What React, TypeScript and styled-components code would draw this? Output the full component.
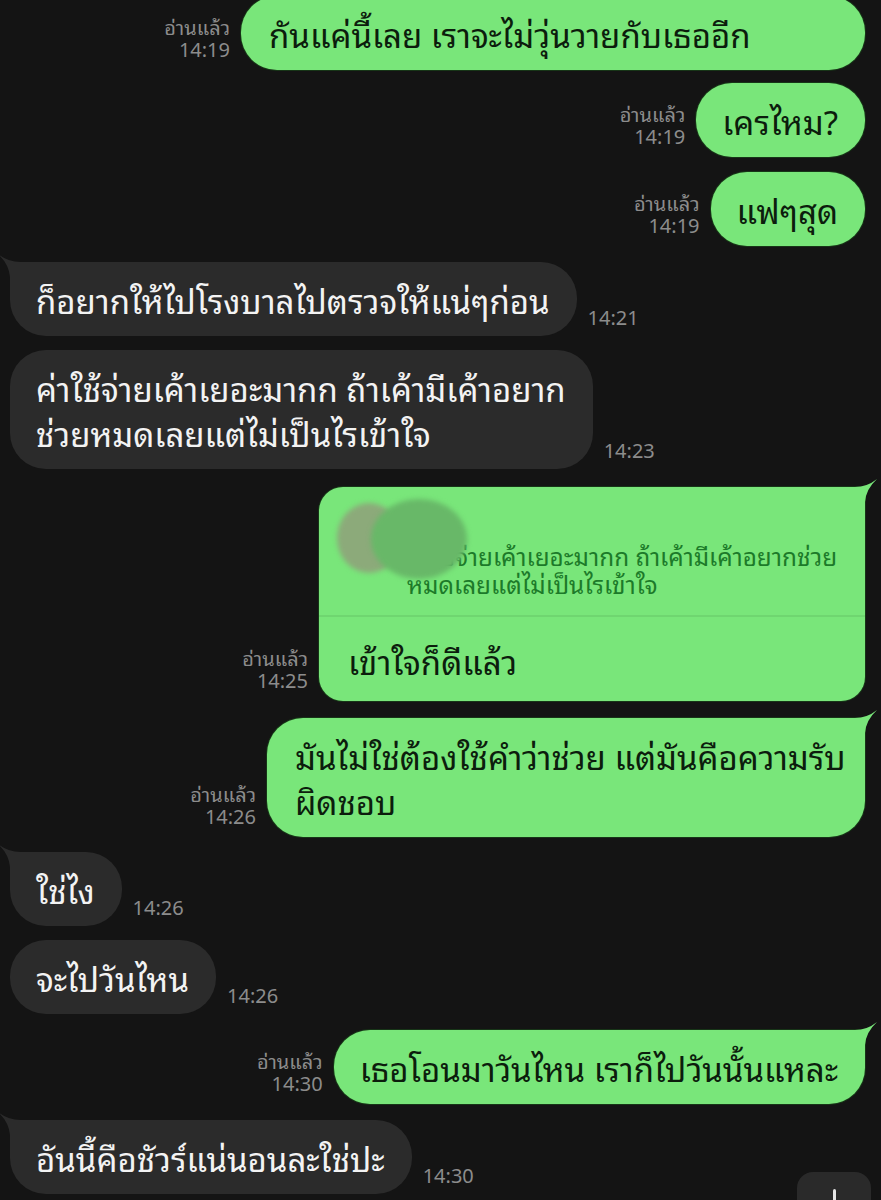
import React from "react";
import styled, { createGlobalStyle } from "styled-components";

const GlobalStyle = createGlobalStyle`
  html, body { margin: 0; padding: 0; background: #141414; }
  * { box-sizing: border-box; }
`;

const GREEN = "#79e67a";
const GRAY = "#2b2b2b";
const FONT = `"Noto Sans Thai Looped", "Noto Sans Thai", "Noto Sans", "DejaVu Sans", sans-serif`;

const Screen = styled.div`
  position: relative;
  width: 881px;
  height: 1200px;
  overflow: hidden;
  background: #141414;
  font-family: ${FONT};
`;

const Chat = styled.div`
  display: flex;
  flex-direction: column;
  padding: 0 16px 0 10px;
  margin-top: -4px;
`;

const Row = styled.div<{ $out?: boolean; $mt: number }>`
  display: flex;
  justify-content: ${(p) => (p.$out ? "flex-end" : "flex-start")};
  align-items: flex-end;
  gap: 11px;
  margin-top: ${(p) => p.$mt}px;
`;

const Meta = styled.div`
  display: flex;
  flex-direction: column;
  align-items: flex-end;
  color: #8c8c8c;
  font-size: 20px;
  line-height: 22px;
  padding-bottom: 11px;
  white-space: nowrap;
`;

const Time = styled.div`
  color: #8c8c8c;
  font-size: 20px;
  line-height: 22px;
  padding-bottom: 9px;
  white-space: nowrap;
`;

const Bubble = styled.div<{ $out?: boolean; $tail?: boolean; $w?: number }>`
  position: relative;
  background: ${(p) => (p.$out ? GREEN : GRAY)};
  color: ${(p) => (p.$out ? "#0c1d0d" : "#f3f3f3")};
  box-shadow: ${(p) => (p.$out ? "0 0 0 1px rgba(25, 80, 25, 0.55)" : "none")};
  font-size: 33px;
  line-height: 45px;
  padding: 14.5px 27px 14.5px 26px;
  border-radius: 36px;
  white-space: nowrap;
  ${(p) => (p.$w ? `width: ${p.$w}px; padding-left: 28px;` : "")}
  ${(p) =>
    p.$tail
      ? p.$out
        ? "border-top-right-radius: 0;"
        : "border-top-left-radius: 0;"
      : ""}
`;

const Tail = styled.svg<{ $out?: boolean }>`
  position: absolute;
  top: -9px;
  width: 37px;
  height: 40px;
  ${(p) => (p.$out ? "right: -13px;" : "left: -13px; transform: scaleX(-1);")}
`;

const TailShape = ({ out }: { out?: boolean }) => (
  <Tail $out={out} viewBox="0 0 37 40">
    <path
      d="M0 9 L14 9 Q26 9 36 1 Q25 11 24 24 L24 40 L0 40 Z"
      fill={out ? GREEN : GRAY}
    />
  </Tail>
);

const ReplyBubble = styled.div`
  position: relative;
  background: ${GREEN};
  box-shadow: 0 0 0 1px rgba(25, 80, 25, 0.55);
  border-radius: 24px;
  border-top-right-radius: 0;
  width: 546px;
`;

const Quote = styled.div`
  position: relative;
  padding: 55px 16px 17px 88px;
  color: #1c7a29;
  font-size: 24.3px;
  line-height: 28px;
  white-space: nowrap;
  border-bottom: 2px solid #6fd670;
`;

const Blob = styled.div`
  position: absolute;
  left: 0;
  top: 0;
  width: 160px;
  height: 100px;
  pointer-events: none;
`;

const BlobPart = styled.div<{ $l: number; $t: number; $w: number; $h: number; $c: string }>`
  position: absolute;
  left: ${(p) => p.$l}px;
  top: ${(p) => p.$t}px;
  width: ${(p) => p.$w}px;
  height: ${(p) => p.$h}px;
  border-radius: 50%;
  background: ${(p) => p.$c};
  filter: blur(2.5px);
`;

const ReplyText = styled.div`
  padding: 22px 25px 18px 29px;
  color: #0c1d0d;
  font-size: 33px;
  line-height: 44px;
  white-space: nowrap;
`;

const ScrollButton = styled.div`
  position: absolute;
  left: 797px;
  top: 1172px;
  width: 74px;
  height: 60px;
  border-radius: 16px;
  background: #2a2a2a;
  display: flex;
  justify-content: center;
`;

const ArrowStem = styled.div`
  margin-top: 17px;
  width: 3px;
  height: 16px;
  border-radius: 2px;
  background: #e6e6e6;
`;

const ReadMeta = ({ t }: { t: string }) => (
  <Meta>
    <span>อ่านแล้ว</span>
    <span>{t}</span>
  </Meta>
);

export default function App() {
  return (
    <Screen>
      <GlobalStyle />
      <Chat>
        <Row $out $mt={0}>
          <ReadMeta t="14:19" />
          <Bubble $out $w={624}>
            กันแค่นี้เลย เราจะไม่วุ่นวายกับเธออีก
          </Bubble>
        </Row>
        <Row $out $mt={13}>
          <ReadMeta t="14:19" />
          <Bubble $out>เครไหม?</Bubble>
        </Row>
        <Row $out $mt={15}>
          <ReadMeta t="14:19" />
          <Bubble $out>แฟๆสุด</Bubble>
        </Row>
        <Row $mt={16}>
          <Bubble $tail>
            <TailShape />
            ก็อยากให้ไปโรงบาลไปตรวจให้แน่ๆก่อน
          </Bubble>
          <Time>14:21</Time>
        </Row>
        <Row $mt={14}>
          <Bubble>
            ค่าใช้จ่ายเค้าเยอะมากก ถ้าเค้ามีเค้าอยาก
            <br />
            ช่วยหมดเลยแต่ไม่เป็นไรเข้าใจ
          </Bubble>
          <Time>14:23</Time>
        </Row>
        <Row $out $mt={18}>
          <ReadMeta t="14:25" />
          <ReplyBubble>
            <TailShape out />
            <Quote>
              ค่าใช้จ่ายเค้าเยอะมากก ถ้าเค้ามีเค้าอยากช่วย
              <br />
              หมดเลยแต่ไม่เป็นไรเข้าใจ
              <Blob>
                <BlobPart $l={18} $t={16} $w={64} $h={70} $c="#8caa7a" />
                <BlobPart $l={52} $t={12} $w={96} $h={80} $c="#68b868" />
              </Blob>
            </Quote>
            <ReplyText>เข้าใจก็ดีแล้ว</ReplyText>
          </ReplyBubble>
        </Row>
        <Row $out $mt={17}>
          <ReadMeta t="14:26" />
          <Bubble $out $tail $w={598}>
            <TailShape out />
            มันไม่ใช่ต้องใช้คำว่าช่วย แต่มันคือความรับ
            <br />
            ผิดชอบ
          </Bubble>
        </Row>
        <Row $mt={15}>
          <Bubble $tail>
            <TailShape />
            ใช่ไง
          </Bubble>
          <Time>14:26</Time>
        </Row>
        <Row $mt={14}>
          <Bubble>จะไปวันไหน</Bubble>
          <Time>14:26</Time>
        </Row>
        <Row $out $mt={16}>
          <ReadMeta t="14:30" />
          <Bubble $out $tail>
            <TailShape out />
            เธอโอนมาวันไหน เราก็ไปวันนั้นแหละ
          </Bubble>
        </Row>
        <Row $mt={16}>
          <Bubble $tail>
            <TailShape />
            อันนี้คือชัวร์แน่นอนละใช่ปะ
          </Bubble>
          <Time>14:30</Time>
        </Row>
      </Chat>
      <ScrollButton>
        <ArrowStem />
      </ScrollButton>
    </Screen>
  );
}
